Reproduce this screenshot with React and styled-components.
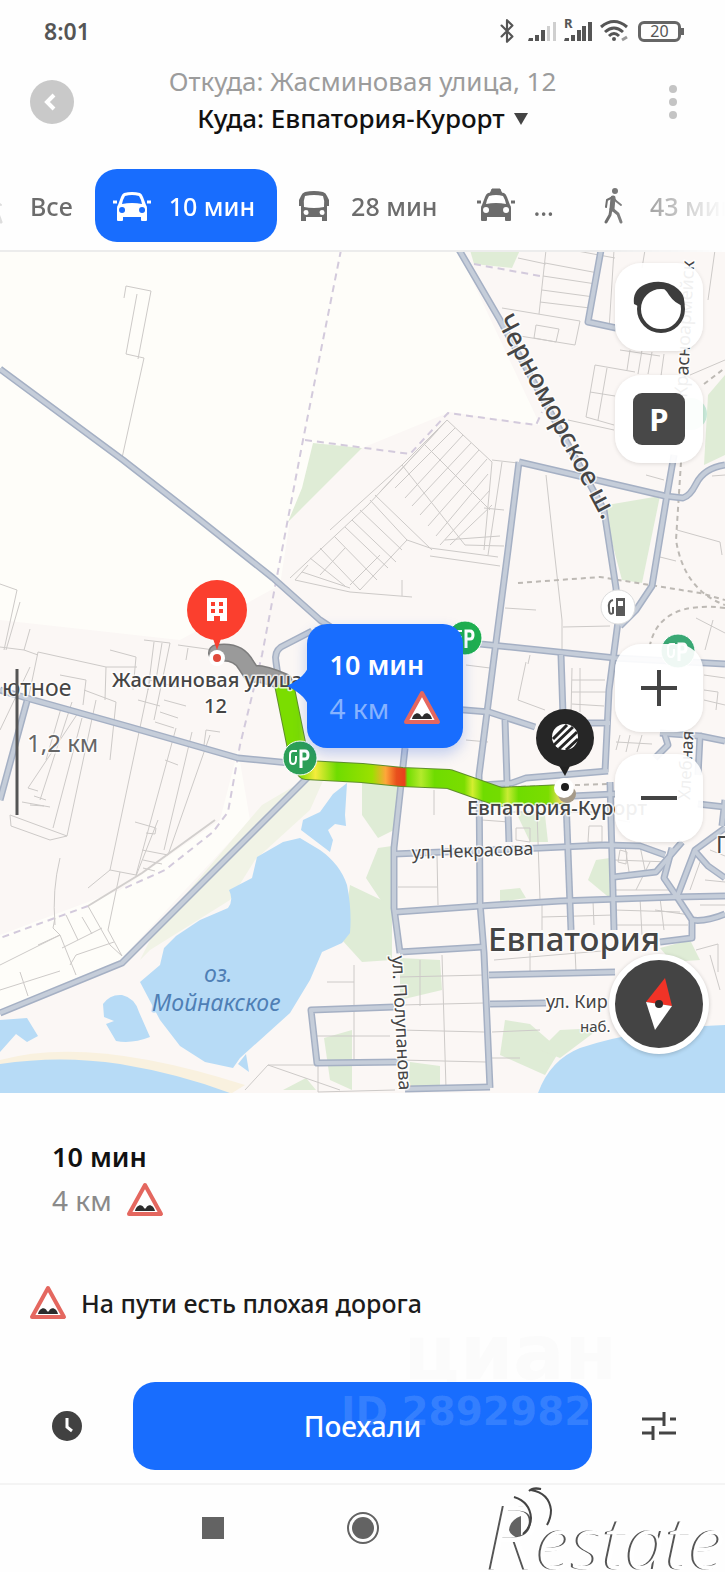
import React, { useState } from 'react'
import styled, { createGlobalStyle } from 'styled-components'
import { Bluetooth } from 'lucide-react'

const ROADS = [
  'M0 369 L123 460 L200 520 L273 578 L320 620 L332 628',
  'M312 631 L281 647 Q274 652 276 662 L280 690',
  'M458 248 L500 320 L560 430 L604 510 L616 588 L618 622 L609 690 L605 772',
  'M482 785 L512 783 L526 778 L608 771',
  'M519 462 L665 496 L683 498 Q690 496 696 484 Q704 468 725 465',
  'M519 462 L508 550 L495 650 L479 775 L480 903 L484 953 L490 1088',
  'M674 455 L667 495 L652 586 L636 610 L620 626',
  'M470 643 L500 646 L615 658 L725 664',
  'M561 655 L563 715',
  'M0 690 L30 699 L130 727 L238 758 L300 764',
  'M27 701 L0 800',
  'M308 777 L122 963 L0 1013',
  'M405 748 L394 848 L394 908 L400 953',
  'M440 708 L489 712 L535 727',
  'M575 723 L610 723',
  'M505 720 L509 842',
  'M396 912 L480 906 L560 901 L675 897 L725 896',
  'M400 952 L482 947',
  'M394 854 L540 848 L605 845 L640 846 L665 855',
  'M566 800 L571 930',
  'M610 782 L614 930',
  'M573 796 L615 794',
  'M614 877 L656 872 L682 842',
  'M725 828 L695 850 L677 897 L692 920 L692 938 L660 942',
  'M672 848 L664 878 L677 897',
  'M694 850 L708 866 L725 878',
  'M692 920 Q706 922 725 914',
  'M489 975 L615 972',
  'M490 1004 L546 1003',
  'M394 1007 L311 1010 L317 1063 L400 1062',
  'M405 1089 L490 1087',
  'M601 250 L588 322 L616 328',
  'M698 804 L725 807',
  'M664 732 L668 745 L655 758',
  'M660 733 L700 736 L698 775',
  'M700 736 L725 741',
  'M725 800 L722 826',
]

const LANES = [
  // outskirts in the north west
  'M124 298 L126 286 L151 291 L138 359 M137 294 L126 354 L144 358 L122 458',
  // grid under the start pin
  'M0 584 L17 590 L4 650 M20 602 L6 650 M30 629 L24 650 L0 647 M24 650 L38 655 M38 652 L106 667 L105 700 M38 652 L28 700 M106 667 L137 667 M144 640 L170 643 L154 720 M154 642 L148 690 M162 643 L156 680 M110 650 L136 657 L133 690 M178 645 L214 650 M188 648 L186 660',
  'M30 667 L0 730 M60 675 L86 680 L83 705 M84 690 L116 702 L110 760 M72 702 L40 800 M80 710 L28 788 L38 791 M62 705 L46 760 M46 800 L34 796 M50 807 L22 802 M82 718 L53 828 M96 700 L67 836 L10 815 L11 826 L50 840 L67 836 M44 806 L30 805',
  'M150 680 L110 870 L136 875 L176 728 M150 680 L180 688 M110 870 L88 888 M120 872 L108 930 L122 956 M158 820 L136 876 M210 735 L168 855 L142 850 M192 732 L164 850 M204 745 L206 730 L220 732 M135 822 L156 828 L155 834 L146 833 M165 760 L178 765 M60 858 Q52 890 55 925 M88 906 L110 945 L122 956 M0 965 L60 935 L76 975 M20 972 L28 996 M0 990 L60 971 M38 945 L60 935 L53 928 L55 918 M66 915 L78 940 M82 917 L92 934 M62 948 L102 928 M70 965 L76 955 L114 942',
  'M164 700 L186 706 M160 712 L178 718 M155 722 L174 728 M138 700 L160 706 M143 860 L162 864 M143 868 L155 871',
  // allotments
  'M447 420 L368 505 L290 578 M447 420 L492 462 L484 550 M447 420 L402 465 L330 530 M423 443 L490 510 M402 465 L465 545 M375 495 L432 550 M438 430 L380 492 M455 428 L395 488 M463 435 L405 498 M471 443 L412 506 M479 450 L420 515 M487 459 L428 526 M488 474 L436 536 M490 490 L440 545 M492 505 L450 545 M370 500 L407 540 L360 590 M360 510 L402 550 M352 520 L396 562 M345 527 L388 568 M334 536 L377 580 M320 548 L360 590 M310 558 L345 586 M345 548 L320 575 M380 555 L350 585 M308 565 L295 580 L350 592 L412 597 M302 572 L350 588 M407 540 L430 548 L498 557 M430 556 L500 566 M465 545 L504 546 M445 540 L500 536 M492 460 L518 463 M502 462 L488 555 M484 508 L504 510 M402 580 L402 596',
  // northern blocks
  'M546 250 L539 314 M545 263 L598 273 M543 276 L596 284 M542 290 L594 297 M540 302 L590 308 M572 250 L615 258 M502 308 L580 321 L575 345 L520 336 M536 325 L559 329 L556 342 L534 338 Z M595 365 L635 372 M595 365 L586 417 L614 425 M607 368 L598 420 M590 392 L615 396 M620 350 L660 356 M630 350 L627 370 M642 350 L638 374 M652 352 L648 374 M664 354 L661 376 M568 420 L614 430 M614 250 L609 330 M645 250 L642 268 M715 250 L708 300 M725 360 L690 375 M518 258 L546 264',
  // field roads
  'M546 475 L553 540 L562 620 L562 655 M505 608 L536 610 M563 627 L610 626 M660 557 L676 561 M677 530 L720 542 L722 555 M646 475 L664 480 M712 476 L725 475 M696 618 L725 633 M713 620 L705 650',
  // city blocks
  'M466 665 L490 668 M466 740 L488 742 M526 662 L518 700 L545 710 M530 655 L528 664 M572 668 L571 715 M580 668 L580 712 M572 680 L605 680 M572 692 L608 692 M572 704 L604 706 M482 820 L509 822 M516 828 L530 828 L530 842 L516 840 Z M589 826 L602 826 L602 842 L588 842 Z M512 812 L600 812 M537 812 L540 900 M398 887 L437 887 M437 855 L438 905 M434 790 L434 815 M542 917 L614 915 M542 901 L542 930 M593 901 L594 925 M614 860 L670 862 M625 846 L630 878 M640 846 L646 875 M614 890 L670 890 M636 890 L650 862 M614 910 L680 912 M640 898 L642 935 M660 898 L664 930 M614 925 L688 925 M655 910 L690 915 M700 862 L690 890 M705 880 L725 882 M710 850 L725 856 M700 905 L725 905 M620 735 L616 750 M630 735 L626 752 M642 735 L637 752 M616 742 L652 744 M704 675 L725 678 M704 690 L718 692 L716 710 M704 700 L725 705 M618 820 L630 822 M620 850 L627 852 L626 864 L618 862 Z',
  'M442 955 L446 1088 M420 960 L420 1006 M400 977 L484 975 M400 1005 L484 1003 M400 1030 L484 1032 M400 1060 L486 1062 M354 965 L354 1063 M327 982 L354 982 M316 1036 L390 1036 M340 1090 L268 1065 L245 1090 M268 1065 L318 1065 L318 1092 L395 1090 M492 1032 L540 1030 M490 1058 L520 1058 M530 953 L530 975 M575 950 L576 972 M494 960 L614 950 M696 950 L718 944 L718 972 M710 955 L720 990',
]

const GREENS = [
  'M313 443 L362 448 L288 522 L302 488 Z',
  'M470 250 L520 250 L512 268 L474 264 Z',
  'M607 505 L660 496 L642 583 L622 580 L606 520 Z',
  'M708 395 L725 375 L725 455 L704 465 Z',
  'M362 780 L402 782 L394 830 L378 838 L362 815 Z',
  'M378 848 L392 846 L392 950 L370 940 L384 905 L366 878 Z',
  'M350 885 L392 905 L392 960 L362 962 L342 940 Z',
  'M596 860 L610 858 L612 900 L588 880 Z',
  'M500 890 L520 888 L526 898 L500 902 Z',
  'M505 1020 L530 1024 L560 1050 L545 1075 L500 1055 Z',
  'M560 1030 L600 1028 L560 1058 L540 1050 Z',
  'M324 1038 L352 1030 L352 1090 L330 1080 Z',
  'M400 958 L440 960 L442 990 L400 1000 Z',
  'M410 1062 L440 1066 L440 1086 L408 1086 Z',
  'M283 1090 L306 1078 L316 1090 Z',
  'M515 810 L545 815 L548 842 L530 842 Z',
  'M660 948 L690 940 L700 960 L672 962 Z',
]

const STOPS = [
  [0, '#7bdd00'], [6, '#f5ec3c'], [14, '#6fdc00'], [27, '#9be000'], [32, '#ffa63a'],
  [36, '#e8501c'], [39, '#e8401c'], [40, '#6fdc00'], [45, '#b4ea2c'], [50, '#6fdc00'],
  [61, '#7bdd00'], [64, '#d4ee30'], [68, '#6fdc00'], [74, '#74dc00'], [77, '#c9ec35'],
  [81, '#6fdc00'], [92, '#7bdd00'], [97, '#f5dc6a'], [100, '#b6a890'],
]

const ROUTE = 'M284 684 L299 758 L306 770 L362 773 L402 777 L449 779 L500 797 L565 794'

function BadRoadSign({ size = 38 }) {
  return (
    <svg width={size} height={size} viewBox="0 0 38 38" aria-hidden="true">
      <path d="M19 4 L35 33 H3 Z" fill="#fff" stroke="#e4675f" strokeWidth="4" strokeLinejoin="round" />
      <path d="M9 30 C10 24 16 22 18 27 Q19 28 20 27 C22 22 28 24 29 30 Z" fill="#2c2c2c" />
    </svg>
  )
}

function CarIcon({ taxi }) {
  return (
    <svg width="38" height="38" viewBox="0 0 38 38" aria-hidden="true">
      {taxi && <path d="M13 7 L15 2 H23 L25 7 Z M16 5 h1 M20 5 h1" fill="currentColor" stroke="currentColor" strokeLinejoin="round" />}
      <path
        fillRule="evenodd"
        fill="currentColor"
        d="M11 6 Q19 4 27 6 Q29 7 30 10 L33 18 Q34 19 34 21 V33 Q34 34 33 34 H29 Q28 34 28 33 V30 H10 V33 Q10 34 9 34 H5 Q4 34 4 33 V21 Q4 19 5 18 L8 10 Q9 7 11 6 Z M12 9 Q10 12 9 17 Q19 15 29 17 Q28 12 26 9 Q19 7 12 9 Z M9 20 a3 3 0 1 0 .1 6 a3 3 0 0 0 -.1 -6 Z M29 20 a3 3 0 1 0 .1 6 a3 3 0 0 0 -.1 -6 Z"
      />
      <path d="M0 15 h4 M34 15 h4" stroke="currentColor" strokeWidth="3" />
    </svg>
  )
}

function BusIcon() {
  return (
    <svg width="38" height="38" viewBox="0 0 38 38" aria-hidden="true">
      <path
        fillRule="evenodd"
        fill="currentColor"
        d="M10 5 Q19 3 28 5 Q31 6 32 9 L34 13 V19 H32 V34 H27 V30 H11 V34 H6 V19 H4 V13 L6 9 Q7 6 10 5 Z M10 9 Q8 14 9 20 Q19 22 29 20 Q30 14 28 9 Q19 7 10 9 Z M11 23 a2.5 2.5 0 1 0 .1 5 a2.5 2.5 0 0 0 -.1 -5 Z M27 23 a2.5 2.5 0 1 0 .1 5 a2.5 2.5 0 0 0 -.1 -5 Z"
      />
    </svg>
  )
}

function WalkIcon() {
  return (
    <svg width="38" height="38" viewBox="0 0 38 38" aria-hidden="true" fill="none" stroke="currentColor" strokeWidth="2" strokeLinecap="round" strokeLinejoin="round">
      <circle cx="21" cy="4" r="3" fill="currentColor" stroke="none" />
      <path d="M12 20 L13 13 L19 10 L22 14 L27 18" />
      <path d="M19 11 L18 22" strokeWidth="5" />
      <path d="M18 22 L24 27 L27 35 M17 22 L16 28 L12 35" strokeWidth="3" />
    </svg>
  )
}

function StatusIcons() {
  return (
    <StatusGroup>
      <Bluetooth size={26} strokeWidth={2} />
      <svg width="28" height="22" viewBox="0 0 28 22" aria-hidden="true" fill="currentColor">
        <path d="M1 18 h4 v3 h-5 Z M7 15 h4 v6 h-4 Z M13 10 h4 v11 h-4 Z" />
        <path d="M19 6 h3 v15 h-3 Z M25 2 h3 v19 h-3 Z" fill="#cfcfcf" />
      </svg>
      <SignalBox>
        <small>R</small>
        <svg width="28" height="22" viewBox="0 0 28 22" aria-hidden="true" fill="currentColor">
          <path d="M1 18 h4 v3 h-5 Z M7 15 h4 v6 h-4 Z M13 10 h4 v11 h-4 Z M18 6 h4 v15 h-4 Z M24 2 h4 v19 h-4 Z" />
        </svg>
      </SignalBox>
      <svg width="30" height="24" viewBox="0 0 30 24" aria-hidden="true" fill="none" stroke="currentColor" strokeWidth="3">
        <path d="M1 8 Q14 -3 27 8 M5 13 Q14 5 23 13 M9 17 Q14 12 19 17" />
        <circle cx="14" cy="20" r="2" fill="currentColor" stroke="none" />
        <path d="M22 21 l5 -3" stroke="#999" />
      </svg>
      <Battery>20</Battery>
    </StatusGroup>
  )
}

function PoiBadge({ x, y, color = '#2c9f57' }) {
  return (
    <g transform={`translate(${x} ${y})`}>
      <circle r="17" fill={color} stroke="#fff" strokeWidth="1" />
      <path d="M-3 -7 h-4 q-3 0 -3 4 v5 q0 4 3 4 q3 0 3 -5 v-3" fill="none" stroke="#fff" strokeWidth="2" />
      <path d="M1 10 V-7 H5 Q8 -7 8 -3 Q8 1 5 1 H1" fill="none" stroke="#fff" strokeWidth="3" />
    </g>
  )
}

function CityMap() {
  return (
    <MapCanvas viewBox="0 252 725 841" preserveAspectRatio="xMidYMid slice" role="img" aria-label="Карта">
      <defs>
        <linearGradient id="traffic" gradientUnits="userSpaceOnUse" x1="299" y1="0" x2="570" y2="0">
          {STOPS.map(([at, color]) => <stop key={at} offset={`${at}%`} stopColor={color} />)}
        </linearGradient>
        <path id="highway" d="M496 320 L612 538" />
      </defs>

      <rect y="250" width="725" height="843" fill="#fefdf9" />
      <path d="M0 620 L180 640 L280 585 L290 520 L362 448 L450 412 L540 425 L458 250 H725 V1093 H0 V1010 L120 960 L250 820 L238 750 L220 820 L120 890 L0 935 Z" fill="#fbf7f5" />
      {/* beaches */}
      <path d="M330 765 L262 805 L155 930 L140 960 L150 950 L230 900 L255 860 L310 810 Z" fill="#f1f3e6" />
      <path d="M0 1060 Q90 1035 245 1085 L232 1093 L0 1080 Z" fill="#f9f1df" />
      {GREENS.map((d) => <path key={d} d={d} fill="#dfecd6" />)}

      <g fill="#b7dbf6">
        <path d="M300 838 L320 850 Q340 864 347 885 Q352 910 350 933 L342 943 L322 952 L310 980 L290 1013 L240 1058 L233 1068 L205 1062 L180 1046 L160 1020 L140 982 L160 965 L164 948 L176 936 L200 920 L228 908 Q234 900 229 890 L252 878 L257 857 L283 842 Z" />
        <path d="M347 783 L333 794 L320 812 L303 820 L301 830 L330 852 L333 840 L328 830 L335 824 L346 826 L345 815 Z" />
        <path d="M103 1004 Q110 994 122 995 Q135 998 139 1012 L150 1037 Q132 1044 116 1041 L106 1024 L114 1021 L104 1017 Z" />
        <path d="M0 1020 L27 1018 L38 1036 L27 1042 L16 1034 L0 1052 Z" />
        <path d="M0 1064 Q60 1055 120 1064 Q180 1074 230 1093 H0 Z" />
        <path d="M238 1064 L246 1054 L249 1072 Z" />
        <path d="M538 1093 Q550 1060 580 1048 Q640 1028 725 1025 V1093 Z" />
      </g>

      <g fill="none" stroke="#cdcac8" strokeWidth="1">
        {LANES.map((d) => <path key={d} d={d} />)}
      </g>
      <g fill="none" stroke="#d3cadc" strokeWidth="2" strokeDasharray="7 5">
        <path d="M341 250 L303 440 L262 655 L240 745 L228 812 L213 832 L165 870 L125 888" />
        <path d="M305 440 L410 454 L448 413 L536 425 L542 412" />
        <path d="M88 906 L0 938" />
        <path d="M474 264 L540 276" />
      </g>
      <g fill="none" stroke="#bdb9b4" strokeWidth="2" strokeDasharray="5 4">
        <path d="M518 583 L600 577 L700 593 L725 600" />
        <path d="M681 462 L676 540 Q684 590 725 605" />
        <path d="M725 608 Q660 600 650 645" />
        <path d="M512 787 L608 784" />
        <path d="M704 384 L725 368" />
      </g>
      <path d="M88 906 L142 873 L215 820" fill="none" stroke="#d2cfcd" strokeWidth="2" />

      <g fill="none" strokeLinejoin="round">
        <g stroke="#a5b0c4" strokeWidth="7">{ROADS.map((d) => <path key={d} d={d} />)}</g>
        <g stroke="#c5cdd9" strokeWidth="4">{ROADS.map((d) => <path key={d} d={d} />)}</g>
      </g>

      <path d="M217 653 Q238 650 246 665 L252 674 Q262 672 284 682" fill="none" stroke="#7d7d7d" strokeWidth="18" strokeLinecap="round" />
      <path d="M217 653 Q238 650 246 665 L252 674 Q262 672 284 682" fill="none" stroke="#9a9a9a" strokeWidth="15" strokeLinecap="round" />
      <path d={ROUTE} fill="none" stroke="#5f8f2a" strokeWidth="20" strokeLinejoin="round" />
      <path d={ROUTE} fill="none" stroke="url(#traffic)" strokeWidth="18" strokeLinejoin="round" />

      <PoiBadge x={465} y={638} color="#1fae50" />
      <PoiBadge x={678} y={651} color="#3aa874" />
      <PoiBadge x={300} y={758} />
      <circle cx="691" cy="414" r="16" fill="#c9ead9" />

      <circle cx="618" cy="607" r="17" fill="#fff" stroke="#ddd" />
      <path d="M616 598 h9 v18 h-9 Z M618 601 h5 v5 h-5 Z" fill="#5a5a5a" fillRule="evenodd" />
      <path d="M613 600 q-5 1 -4 8 q0 8 4 5 v-6" fill="none" stroke="#5a5a5a" strokeWidth="2" />

      <MapText>
        <text fontSize="26" fontWeight="500"><textPath href="#highway">Черноморское ш.</textPath></text>
        <text fontSize="18" transform="translate(687 398) rotate(-87)">Красноармейск</text>
        <text fontSize="17" transform="translate(690 800) rotate(-87)">Хлебная</text>
        <text fontSize="23" x="2" y="696">ютное</text>
        <text fontSize="24" x="27" y="752" fill="#666">1,2 км</text>
        <text fontSize="20" x="112" y="687" fontWeight="500">Жасминовая улица,</text>
        <text fontSize="20" x="204" y="713" fontWeight="500">12</text>
        <text fontSize="20" x="467" y="815" fontWeight="500">Евпатория-Курорт</text>
        <text fontSize="18" transform="translate(412 859) rotate(-2)">ул. Некрасова</text>
        <text fontSize="18" transform="translate(392 956) rotate(87)">ул. Полупанова</text>
        <text fontSize="33" x="488" y="951" fontWeight="500">Евпатория</text>
        <text fontSize="18" x="546" y="1008">ул. Кир</text>
        <text fontSize="15" x="580" y="1032">наб.</text>
        <text fontSize="23" x="716" y="853">П</text>
        <g fill="#4f7fb5" fontStyle="italic" stroke="#b7dbf6">
          <text fontSize="23" x="204" y="982">оз.</text>
          <text fontSize="23" x="152" y="1011">Мойнакское</text>
        </g>
      </MapText>
      <path d="M17 669 V815" stroke="#555" strokeWidth="3" />

      <g>
        <path d="M212 636 L217 650 L222 636 Z" fill="#f8402f" />
        <circle cx="217" cy="610" r="30" fill="#fb3f2e" />
        <path d="M207 598 h20 v23 h-7 v-5 h-6 v5 h-7 Z M211 602 v4 h4 v-4 Z M219 602 v4 h4 v-4 Z M211 609 v4 h4 v-4 Z M219 609 v4 h4 v-4 Z" fill="#fff" fillRule="evenodd" />
        <circle cx="217" cy="658" r="8" fill="#fff" />
        <circle cx="217" cy="658" r="4" fill="#e04a3c" />
      </g>
      <g>
        <circle cx="567" cy="794" r="9" fill="#a59a88" />
        <circle cx="564" cy="788" r="10" fill="#fff" />
        <path d="M558 764 L565 776 L571 764 Z" fill="#222" />
        <circle cx="565" cy="738" r="29" fill="#262626" />
        <circle cx="565" cy="737" r="13" fill="#fff" />
        <path d="M553 739 L567 725 M554 745 L573 727 M559 749 L577 732 M566 750 L578 739" stroke="#262626" strokeWidth="3" />
        <circle cx="565" cy="787" r="4" fill="#1d1d1d" />
      </g>
    </MapCanvas>
  )
}

const modes = [
  { id: 'all', label: 'Все' },
  { id: 'car', label: '10 мин', icon: <CarIcon /> },
  { id: 'bus', label: '28 мин', icon: <BusIcon /> },
  { id: 'taxi', label: '...', icon: <CarIcon taxi /> },
  { id: 'walk', label: '43 мин', icon: <WalkIcon /> },
]

export default function App() {
  const [mode, setMode] = useState('car')

  return (
    <Page>
      <GlobalStyle />
      <StatusBar>
        <Clock>8:01</Clock>
        <StatusIcons />
      </StatusBar>

      <Header>
        <BackButton aria-label="Назад">
          <svg width="44" height="44" viewBox="0 0 44 44"><path d="M24 15 L17 22 L24 29" fill="none" stroke="#fff" strokeWidth="4" /></svg>
        </BackButton>
        <Titles>
          <RouteEnd $muted>Откуда: Жасминовая улица, 12</RouteEnd>
          <RouteEnd>
            Куда: Евпатория-Курорт
            <svg width="14" height="12" viewBox="0 0 14 12" aria-hidden="true"><path d="M0 0 H14 L7 12 Z" fill="#444" /></svg>
          </RouteEnd>
        </Titles>
        <MoreButton aria-label="Ещё"><i /><i /><i /></MoreButton>
      </Header>

      <Modes>
        <ModesEdge><WalkIcon /></ModesEdge>
        {modes.map((m) => (
          <ModeButton key={m.id} $active={m.id === mode} onClick={() => setMode(m.id)}>
            {m.icon}
            <span>{m.label}</span>
          </ModeButton>
        ))}
      </Modes>

      <MapArea>
        <CityMap />
        <Callout>
          <CalloutTail viewBox="0 0 22 44" aria-hidden="true"><path d="M22 0 Q20 12 0 22 Q20 32 22 44 Z" fill="#186dfe" /></CalloutTail>
          <Duration $light>10 мин</Duration>
          <Distance $light>4 км <BadRoadSign /></Distance>
        </Callout>
        <LayerControls>
          <MapButton aria-label="Алиса">
            <svg width="54" height="54" viewBox="0 0 54 54">
              <path d="M2 24 Q0 8 17 3 Q34 -1 46 9 Q54 16 52 26 L30 20 L6 26 Z" fill="#3c3c3c" />
              <circle cx="29" cy="29" r="22" fill="#fff" stroke="#3c3c3c" strokeWidth="4" />
              <path d="M26 5 Q33 8 37 15 Q43 24 52 26 Q50 12 38 6 Q32 4 26 5 Z" fill="#3c3c3c" />
            </svg>
          </MapButton>
          <MapButton aria-label="Парковки"><ParkingMark>P</ParkingMark></MapButton>
        </LayerControls>
        <ViewControls>
          <MapButton aria-label="Приблизить">
            <svg width="36" height="36" viewBox="0 0 36 36"><path d="M18 0 V36 M0 18 H36" stroke="#444" strokeWidth="4" /></svg>
          </MapButton>
          <MapButton aria-label="Отдалить">
            <svg width="36" height="36" viewBox="0 0 36 36"><path d="M0 18 H36" stroke="#444" strokeWidth="4" /></svg>
          </MapButton>
          <CompassButton aria-label="Компас">
            <svg width="88" height="88" viewBox="0 0 88 88">
              <path d="M50 18 L57 46 L31 42 Z" fill="#f13327" />
              <path d="M31 42 L57 46 L40 70 Z" fill="#fff" />
              <circle cx="44" cy="44" r="4" fill="#2c2c2c" />
            </svg>
          </CompassButton>
        </ViewControls>
      </MapArea>

      <Sheet>
        <Summary>
          <Duration>10 мин</Duration>
          <Distance>4 км <BadRoadSign /></Distance>
        </Summary>
        <Warning><BadRoadSign />На пути есть плохая дорога</Warning>
        <Watermark aria-hidden="true">циан</Watermark>
        <Actions>
          <IconButton aria-label="Время отправления">
            <svg width="32" height="32" viewBox="0 0 32 32"><circle cx="16" cy="16" r="15" fill="#414141" /><path d="M16 8 V17 L21 21" fill="none" stroke="#fff" strokeWidth="3" /></svg>
          </IconButton>
          <GoButton>
            Поехали
            <GoStamp aria-hidden="true">ID 2892982</GoStamp>
          </GoButton>
          <IconButton aria-label="Параметры">
            <svg width="34" height="30" viewBox="0 0 34 30"><path d="M0 8 H22 M22 1 V15 M28 8 H34 M0 22 H11 M11 15 V29 M17 22 H34" stroke="#444" strokeWidth="3" /></svg>
          </IconButton>
        </Actions>
      </Sheet>

      <NavBar>
        <NavButton aria-label="Недавние"><svg width="22" height="22" viewBox="0 0 22 22"><rect width="22" height="22" fill="#636363" /></svg></NavButton>
        <NavButton aria-label="Домой">
          <svg width="34" height="34" viewBox="0 0 34 34"><circle cx="17" cy="17" r="15" fill="none" stroke="#636363" strokeWidth="2" /><circle cx="17" cy="17" r="11" fill="#636363" /></svg>
        </NavButton>
        <NavButton aria-label="Назад"><svg width="22" height="26" viewBox="0 0 22 26"><path d="M19 1 V25 Q8 20 7 15 Q8 5 19 1 Z" fill="#636363" /></svg></NavButton>
        <Brand>
          <b>R</b>estate
        </Brand>
        <BrandWaves viewBox="0 0 50 50" aria-hidden="true">
          <path d="M11 12 Q27 17 28 33 Q28 42 20 49" />
          <path d="M26 6 Q30 2 38 4 Q30 3 28 5 Q46 8 48 25 Q48 33 44 40" />
        </BrandWaves>
      </NavBar>
    </Page>
  )
}

const GlobalStyle = createGlobalStyle`
  * { box-sizing: border-box; }
  body {
    margin: 0;
    background: #fefefe;
    font-family: 'Noto Sans', 'Open Sans', sans-serif;
  }
  button {
    padding: 0;
    border: none;
    background: none;
    font: inherit;
    color: inherit;
    cursor: pointer;
  }
  svg { flex: none; display: block; }
`

const Page = styled.main`
  display: flex;
  flex-direction: column;
  min-height: 100vh;
  overflow: hidden;
`

const StatusBar = styled.div`
  display: flex;
  align-items: center;
  justify-content: space-between;
  height: 62px;
  padding: 0 44px;
  color: #555;
`

const Clock = styled.span`
  font-size: 23px;
  font-weight: 600;
`

const StatusGroup = styled.div`
  display: flex;
  align-items: center;
  gap: 8px;
`

const SignalBox = styled.div`
  position: relative;
  small {
    position: absolute;
    left: 0;
    top: -3px;
    font-size: 13px;
    line-height: 12px;
    font-weight: 700;
  }
`

const Battery = styled.span`
  position: relative;
  width: 43px;
  height: 21px;
  border: 3px solid #666;
  border-radius: 6px;
  font-size: 16px;
  line-height: 15px;
  text-align: center;
  &::after {
    content: '';
    position: absolute;
    right: -6px;
    top: 4px;
    width: 3px;
    height: 7px;
    background: #666;
  }
`

const Header = styled.header`
  display: flex;
  align-items: center;
  justify-content: space-between;
  height: 80px;
  padding: 0 30px;
`

const BackButton = styled.button`
  width: 44px;
  height: 44px;
  border-radius: 50%;
  background: #c9c9c9;
`

const Titles = styled.div`
  display: flex;
  flex-direction: column;
  align-items: center;
  padding-bottom: 4px;
`

const RouteEnd = styled.button`
  display: flex;
  align-items: center;
  gap: 9px;
  font-size: 26px;
  line-height: 37px;
  font-weight: ${(p) => (p.$muted ? 400 : 500)};
  color: ${(p) => (p.$muted ? '#9c9c9c' : '#111')};
`

const MoreButton = styled.button`
  display: flex;
  flex-direction: column;
  align-items: center;
  gap: 5px;
  width: 44px;
  i {
    width: 8px;
    height: 8px;
    border-radius: 50%;
    background: #c4c4c4;
  }
`

const Modes = styled.nav`
  display: flex;
  align-items: center;
  height: 110px;
  padding: 27px 0 8px;
  border-bottom: 2px solid #ececec;
  overflow: hidden;
  mask-image: linear-gradient(to right, #000 calc(100% - 120px), transparent 100%);
`

const ModesEdge = styled.span`
  display: flex;
  justify-content: flex-end;
  flex: none;
  width: 12px;
  overflow: hidden;
  color: #ddd;
`

const ModeButton = styled.button`
  display: flex;
  align-items: center;
  flex: none;
  gap: 18px;
  height: 73px;
  padding: 0 22px 0 18px;
  border-radius: 22px;
  font-size: 25px;
  white-space: nowrap;
  font-weight: 500;
  color: ${(p) => (p.$active ? '#fff' : '#6c6c6c')};
  background: ${(p) => (p.$active ? '#186dfe' : 'transparent')};
`

const MapArea = styled.section`
  position: relative;
  height: 841px;
  overflow: hidden;
`

const MapCanvas = styled.svg`
  width: 100%;
  height: 100%;
`

const MapText = styled.g`
  fill: #454545;
  stroke: rgba(255, 255, 255, 0.8);
  stroke-width: 3px;
  paint-order: stroke;
  stroke-linejoin: round;
`

const Callout = styled.div`
  position: absolute;
  left: calc(50% - 56px);
  top: 372px;
  width: 156px;
  padding: 22px 0 16px 23px;
  border-radius: 20px;
  background: #186dfe;
  box-shadow: 0 6px 14px rgba(24, 80, 220, 0.25);
`

const CalloutTail = styled.svg`
  position: absolute;
  left: -20px;
  top: 40px;
  width: 22px;
  height: 44px;
`

const Duration = styled.strong`
  display: block;
  font-size: 27px;
  line-height: 38px;
  font-weight: 600;
  color: ${(p) => (p.$light ? '#fff' : '#111')};
`

const Distance = styled.span`
  display: flex;
  align-items: center;
  gap: 14px;
  font-size: 28px;
  line-height: 48px;
  color: ${(p) => (p.$light ? '#86b3ff' : '#8a8a8a')};
`

const LayerControls = styled.div`
  position: absolute;
  right: 22px;
  top: 11px;
  display: flex;
  flex-direction: column;
  gap: 24px;
`

const ViewControls = styled.div`
  position: absolute;
  right: 22px;
  bottom: 39px;
  display: flex;
  flex-direction: column;
  align-items: center;
  gap: 22px;
`

const MapButton = styled.button`
  display: grid;
  place-items: center;
  width: 88px;
  height: 88px;
  border-radius: 26px;
  background: rgba(255, 255, 255, 0.92);
  box-shadow: 0 1px 4px rgba(0, 0, 0, 0.12);
`

const ParkingMark = styled.span`
  width: 52px;
  height: 52px;
  border-radius: 9px;
  background: #484848;
  color: #fff;
  font-size: 31px;
  line-height: 52px;
  font-weight: 700;
`

const CompassButton = styled.button`
  display: grid;
  place-items: center;
  width: 100px;
  height: 100px;
  margin: 90px -6px 0;
  border: 6px solid #fff;
  border-radius: 50%;
  background: #444;
  box-shadow: 0 1px 4px rgba(0, 0, 0, 0.2);
`

const Sheet = styled.section`
  position: relative;
  padding: 45px 0 13px;
  border-bottom: 2px solid #f4f4f4;
`

const Summary = styled.div`
  padding-left: 52px;
`

const Warning = styled.p`
  display: flex;
  align-items: center;
  gap: 14px;
  margin: 55px 0;
  padding-left: 29px;
  font-size: 25px;
  line-height: 48px;
  font-weight: 500;
  color: #1c1c1c;
`

const Actions = styled.div`
  display: grid;
  grid-template-columns: 133px 1fr 133px;
  align-items: center;
`

const IconButton = styled.button`
  display: grid;
  place-items: center;
  height: 60px;
`

const GoButton = styled.button`
  position: relative;
  height: 88px;
  border-radius: 22px;
  overflow: hidden;
  background: #186dfe;
  color: #fff;
  font-size: 28px;
  font-weight: 500;
`

const GoStamp = styled.span`
  position: absolute;
  left: 208px;
  top: 6px;
  font-family: 'DejaVu Sans', sans-serif;
  font-size: 39px;
  line-height: 48px;
  font-weight: 700;
  white-space: nowrap;
  color: rgba(255, 255, 255, 0.13);
`

const Watermark = styled.span`
  position: absolute;
  right: 108px;
  bottom: 88px;
  font-family: 'DejaVu Sans', sans-serif;
  font-size: 76px;
  line-height: 84px;
  font-weight: 700;
  color: #fbfbfb;
`

const NavBar = styled.footer`
  position: relative;
  display: flex;
  align-items: center;
  justify-content: center;
  gap: 90px;
  height: 86px;
`

const NavButton = styled.button`
  display: grid;
  place-items: center;
  width: 60px;
  height: 60px;
`

const Brand = styled.div`
  position: absolute;
  right: 0;
  bottom: 0;
  font-size: 72px;
  line-height: 60px;
  font-style: italic;
  font-weight: 300;
  color: #fff;
  text-shadow: -2px 0 0 #555;
  b {
    font-size: 88px;
    font-weight: 300;
  }
`

const BrandWaves = styled.svg`
  position: absolute;
  right: 172px;
  top: 0;
  width: 50px;
  height: 50px;
  fill: none;
  stroke: #444;
  stroke-width: 2px;
`
